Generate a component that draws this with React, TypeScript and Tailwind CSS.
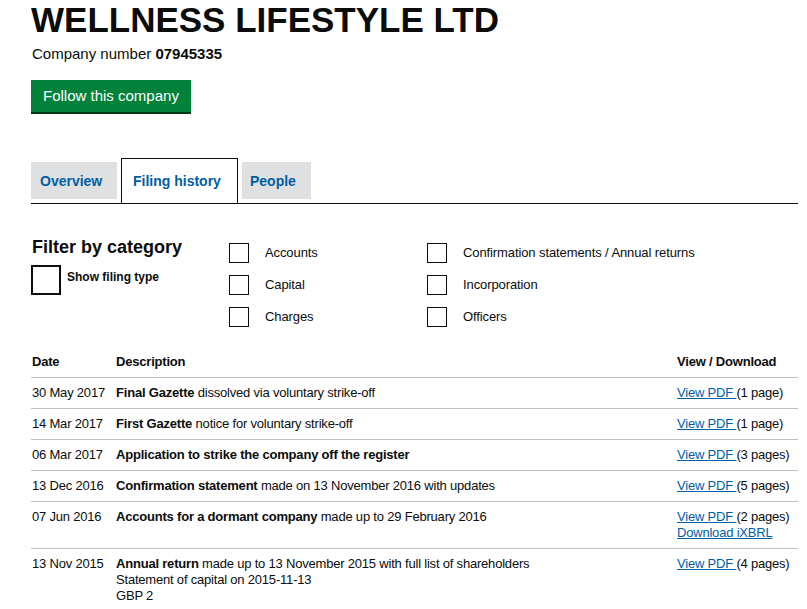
import React from "react";

const rows: { date: string; bold: string; rest: string; extra?: string[]; pages: string; ixbrl?: boolean }[] = [
  { date: "30 May 2017", bold: "Final Gazette", rest: " dissolved via voluntary strike-off", pages: "(1 page)" },
  { date: "14 Mar 2017", bold: "First Gazette", rest: " notice for voluntary strike-off", pages: "(1 page)" },
  { date: "06 Mar 2017", bold: "Application to strike the company off the register", rest: "", pages: "(3 pages)" },
  { date: "13 Dec 2016", bold: "Confirmation statement", rest: " made on 13 November 2016 with updates", pages: "(5 pages)" },
  { date: "07 Jun 2016", bold: "Accounts for a dormant company", rest: " made up to 29 February 2016", pages: "(2 pages)", ixbrl: true },
  {
    date: "13 Nov 2015",
    bold: "Annual return",
    rest: " made up to 13 November 2015 with full list of shareholders",
    extra: ["Statement of capital on 2015-11-13", "GBP 2"],
    pages: "(4 pages)",
  },
];

function Box() {
  return <span className="block w-[20px] h-[20px] border border-[#0b0c0c] bg-white shrink-0" />;
}

function Opt({ label }: { label: string }) {
  return (
    <div className="flex items-center h-[20px] mb-[12px]">
      <Box />
      <span className="ml-[16px] text-[13px] tracking-[-0.1px] text-[#0b0c0c]">{label}</span>
    </div>
  );
}

export default function App() {
  return (
    <div
      className="w-[807px] h-[609px] overflow-hidden bg-white text-[#0b0c0c] pl-[31px] pr-[9px]"
      style={{ fontFamily: '"Liberation Sans", Arial, sans-serif' }}
    >
      <h1 className="text-[35px] leading-[40px] font-bold m-0">WELLNESS LIFESTYLE LTD</h1>
      <p className="text-[15px] leading-[20px] mt-[4px] ml-[1px]">
        Company number <b>07945335</b>
      </p>
      <div className="mt-[16px]">
        <button className="h-[32px] px-[12px] bg-[#00823b] text-white text-[15px] shadow-[0_2px_0_#003618]">
          Follow this company
        </button>
      </div>

      {/* Tabs */}
      <div className="mt-[46px] flex items-end border-b border-[#0b0c0c] h-[46px]">
        <div className="h-[37px] mb-[4px] w-[86px] bg-[#dee0e2] flex items-center pl-[9px] pt-[1px] text-[14px] font-bold text-[#005ea5]">
          Overview
        </div>
        <div className="ml-[4px] h-[45px] w-[117px] border border-b-0 border-[#0b0c0c] bg-white flex items-center pl-[11px] pt-[1px] text-[14px] font-bold text-[#005ea5]">
          Filing history
        </div>
        <div className="ml-[4px] h-[37px] mb-[4px] w-[69px] bg-[#dee0e2] flex items-center pl-[8px] pt-[1px] text-[14px] font-bold text-[#005ea5]">
          People
        </div>
      </div>

      {/* Filter */}
      <div className="flex mt-[39px]">
        <div className="w-[198px]">
          <h2 className="text-[18px] leading-[22px] font-bold -mt-[7px] ml-[1px]">Filter by category</h2>
          <div className="flex items-start mt-[7px]">
            <span className="block w-[30px] h-[30px] border-2 border-[#0b0c0c]" />
            <span className="ml-[6px] mt-[5px] text-[12px] font-bold leading-[14px]">Show filing type</span>
          </div>
        </div>
        <div className="w-[198px]">
          <Opt label="Accounts" />
          <Opt label="Capital" />
          <Opt label="Charges" />
        </div>
        <div>
          <Opt label="Confirmation statements / Annual returns" />
          <Opt label="Incorporation" />
          <Opt label="Officers" />
        </div>
      </div>

      {/* Table */}
      <table className="w-[767px] mt-[8px] border-collapse text-[13px] leading-[16px] tracking-[-0.2px]">
        <thead>
          <tr className="border-b border-[#bfc1c3]">
            <th className="text-left font-bold py-[7px] w-[85px] pl-[1px]">Date</th>
            <th className="text-left font-bold py-[7px]">Description</th>
            <th className="text-left font-bold py-[7px] w-[121px]">View / Download</th>
          </tr>
        </thead>
        <tbody>
          {rows.map((r) => (
            <tr key={r.date} className="border-b border-[#bfc1c3] align-top">
              <td className="py-[7px] pl-[1px] whitespace-nowrap">{r.date}</td>
              <td className="py-[7px]">
                <b>{r.bold}</b>
                {r.rest}
                {r.extra?.map((e) => (
                  <div key={e}>{e}</div>
                ))}
              </td>
              <td className="py-[7px] whitespace-nowrap">
                <a className="text-[#005ea5] underline">View PDF </a>
                {r.pages}
                {r.ixbrl && (
                  <div>
                    <a className="text-[#005ea5] underline">Download iXBRL</a>
                  </div>
                )}
              </td>
            </tr>
          ))}
        </tbody>
      </table>
    </div>
  );
}
